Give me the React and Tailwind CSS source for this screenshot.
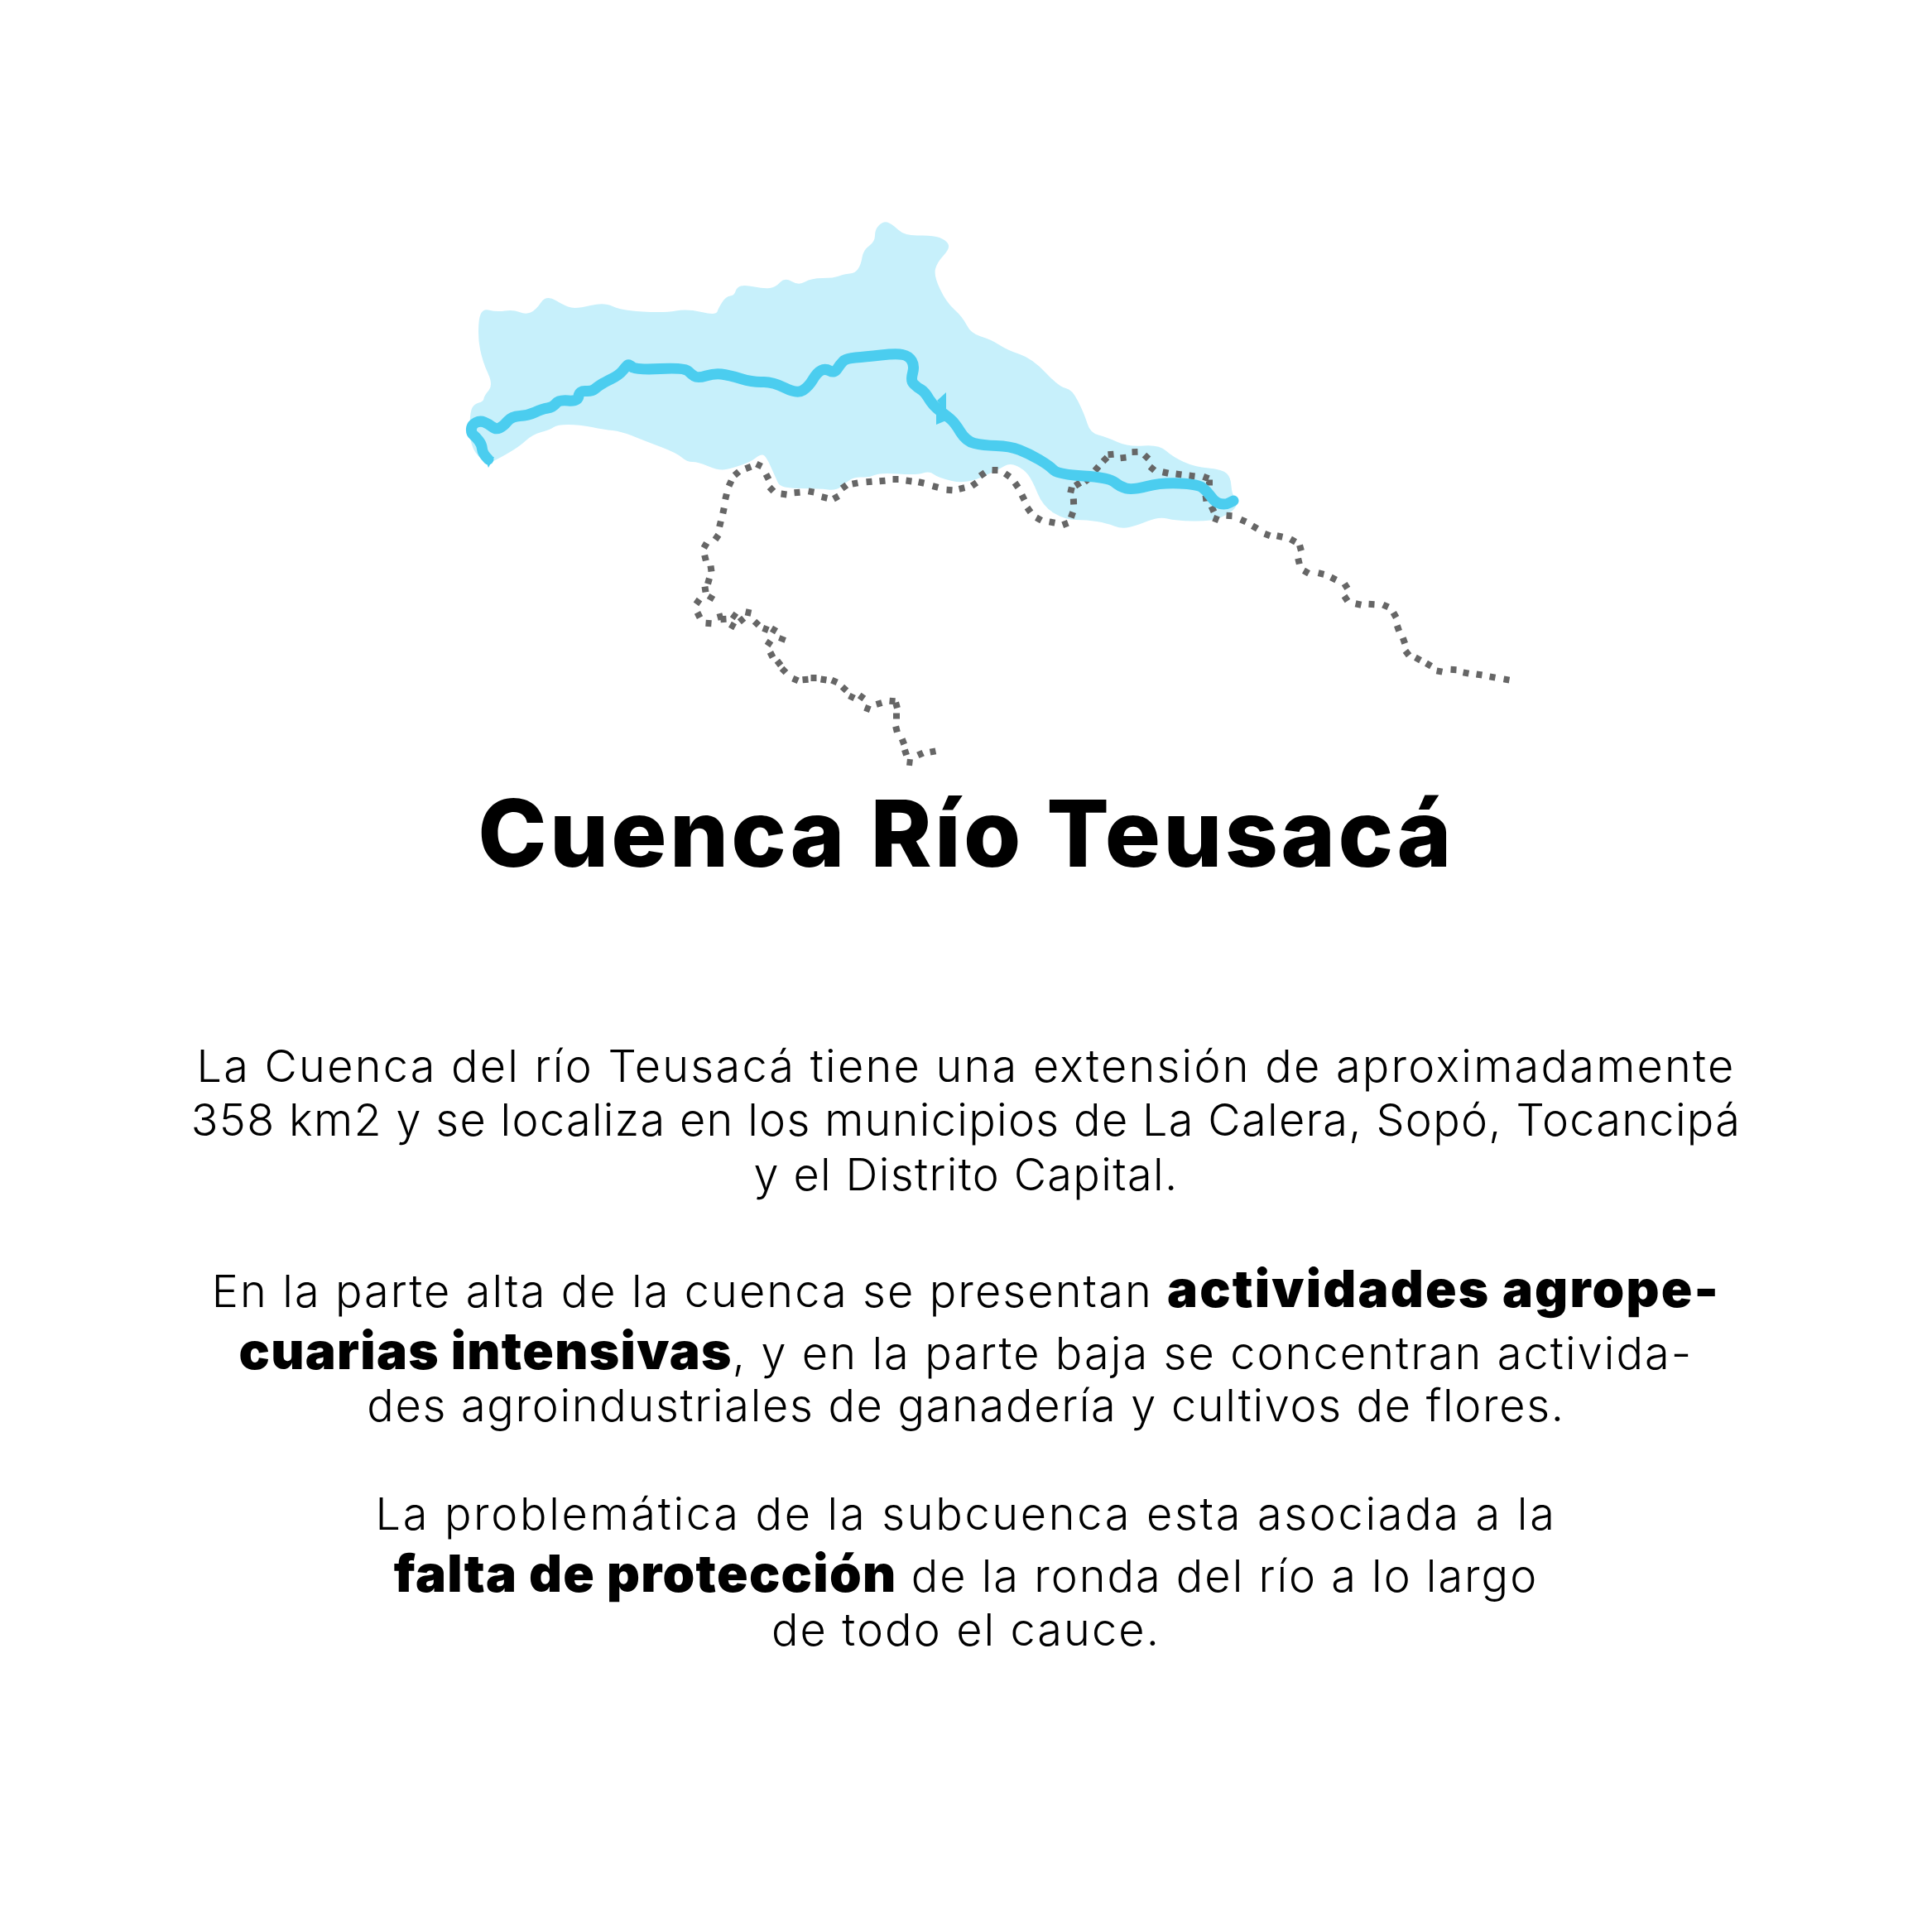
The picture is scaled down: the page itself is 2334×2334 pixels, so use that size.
import React from 'react'

// coordinates read off the reference, in page pixels
const BASIN = [
  [580,372],[600,377],[620,374],[635,380],[647,375],[660,356],[683,370],[697,373],[730,365],[750,375],[803,378],[830,373],[865,381],[868,372],[877,358],[887,357],[890,347],[900,344],[923,349],[937,347],[948,335],[965,345],[980,336],[1007,336],[1020,331],[1033,330],[1040,320],[1043,302],[1057,292],[1057,277],[1067,267],[1077,270],[1093,285],[1127,284],[1143,290],[1148,300],[1132,317],[1128,333],[1143,365],[1163,383],[1173,403],[1197,410],[1217,423],[1247,433],[1280,468],[1295,470],[1310,500],[1317,523],[1337,528],[1363,540],[1400,537],[1417,552],[1443,564],[1477,567],[1487,577],[1488,597],[1497,607],[1487,620],[1463,630],[1420,629],[1400,624],[1373,635],[1355,639],[1337,632],[1313,628],[1287,628],[1260,612],[1247,580],[1237,567],[1220,559],[1207,567],[1167,585],[1133,577],[1123,569],[1107,574],[1063,571],[1050,577],[1033,576],[1023,582],[1010,593],[990,590],[943,590],[937,577],[925,550],[918,549],[907,558],[880,567],[867,568],[843,558],[830,558],[817,547],[780,533],[750,521],[730,519],[700,513],[673,513],[665,519],[643,525],[627,540],[597,557],[588,560],[573,547],[567,527],[568,497],[573,488],[584,485],[585,478],[596,465],[583,437],[577,407],
]

const RIVER = [
  [590,555],[583,548],[582,537],[575,528],[569,523],[570,513],[580,508],[590,512],[599,519],[608,515],[618,503],[638,502],[655,494],[668,492],[675,483],[698,485],[700,472],[715,473],[722,467],[730,462],[748,453],[757,442],[760,440],[768,447],[827,444],[835,452],[843,457],[863,451],[880,453],[910,462],[933,461],[963,476],[977,467],[987,450],[997,445],[1008,451],[1015,440],[1022,433],[1045,431],[1083,427],[1098,430],[1105,442],[1100,460],[1108,468],[1117,473],[1127,490],[1143,502],[1153,510],[1167,533],[1187,538],[1220,539],[1243,548],[1267,562],[1278,573],[1340,577],[1353,588],[1368,592],[1403,583],[1447,585],[1458,593],[1468,607],[1480,610],[1490,605],
]

// every pair is the centre of one dash
const BORDER = [
  [1127,908],[1112,911],[1099,921],[1094,909],[1091,896],[1083,881],[1083,865],[1083,852],[1078,847],[1062,850],[1048,856],[1041,842],[1029,842],[1020,832],[1008,823],[995,821],[983,819],[973,821],[961,821],[947,810],[941,801],[932,791],[929,777],[945,772],[935,761],[925,760],[914,753],[904,740],[896,749],[885,756],[887,744],[874,748],[870,745],[856,753],[844,743],[843,727],[859,722],[852,712],[856,702],[859,687],[852,674],[852,659],[866,649],[870,633],[874,617],[877,600],[882,584],[890,572],[904,565],[917,562],[927,576],[932,591],[947,597],[963,595],[980,594],[996,601],[1010,601],[1020,588],[1033,584],[1050,582],[1066,581],[1082,579],[1098,581],[1113,583],[1130,588],[1147,592],[1162,590],[1177,585],[1187,573],[1202,568],[1217,574],[1228,586],[1236,601],[1243,616],[1255,627],[1271,631],[1287,633],[1295,622],[1297,606],[1294,592],[1302,585],[1313,580],[1325,566],[1335,555],[1342,549],[1357,553],[1371,546],[1385,552],[1392,566],[1408,571],[1424,573],[1440,575],[1457,577],[1461,583],[1457,602],[1465,615],[1469,627],[1485,623],[1502,629],[1516,637],[1531,646],[1546,648],[1562,653],[1571,662],[1569,678],[1578,691],[1596,693],[1611,699],[1626,708],[1626,723],[1641,730],[1657,730],[1674,732],[1685,743],[1689,759],[1696,774],[1700,789],[1713,796],[1726,803],[1739,811],[1756,809],[1771,813],[1787,815],[1803,818],[1820,821],
]

function smooth(pts, closed) {
  const mid = (a, b) => [(a[0] + b[0]) / 2, (a[1] + b[1]) / 2]
  if (closed) {
    const start = mid(pts[pts.length - 1], pts[0])
    let d = `M${start[0]} ${start[1]}`
    pts.forEach((p, i) => {
      const m = mid(p, pts[(i + 1) % pts.length])
      d += `Q${p[0]} ${p[1]} ${m[0]} ${m[1]}`
    })
    return d + 'Z'
  }
  let d = `M${pts[0][0]} ${pts[0][1]}`
  for (let i = 1; i < pts.length - 1; i++) {
    const m = mid(pts[i], pts[i + 1])
    d += `Q${pts[i][0]} ${pts[i][1]} ${m[0]} ${m[1]}`
  }
  const last = pts[pts.length - 1]
  return d + `L${last[0]} ${last[1]}`
}

function dash(p, i) {
  const a = BORDER[Math.max(i - 1, 0)]
  const b = BORDER[Math.min(i + 1, BORDER.length - 1)]
  const len = Math.hypot(b[0] - a[0], b[1] - a[1]) || 1
  const ux = ((b[0] - a[0]) / len) * 3.5
  const uy = ((b[1] - a[1]) / len) * 3.5
  return `M${p[0] - ux} ${p[1] - uy}L${p[0] + ux} ${p[1] + uy}`
}

function BasinMap() {
  return (
    <svg width="2334" height="949" viewBox="0 0 2334 949" className="block shrink-0">
      <path d={smooth(BASIN, true)} fill="#c7f0fb" />
      <path d={BORDER.map(dash).join('')} fill="none" stroke="#666666" strokeWidth="8" />
      <path d={smooth(RIVER, false)} fill="none" stroke="#4bcdef" strokeWidth="13" strokeLinecap="round" strokeLinejoin="round" />
      {/* spike on the bend and the two flared ends */}
      <path d="M1132 484L1143 474V497ZM1131 497V513L1143 508V497ZM585 551L597 552L590 565ZM1468 602L1492 604C1490 612 1480 616 1472 614Z" fill="#4bcdef" />
    </svg>
  )
}

function Line({ className, children }) {
  return <div className={`whitespace-nowrap ${className}`}>{children}</div>
}

export default function App() {
  return (
    <div className="w-[2334px] h-[2334px] bg-white text-black flex flex-col items-center text-center font-['Inter','Liberation_Sans',sans-serif] font-light text-[54px]">
      <BasinMap />
      <h1 className="h-[120px] leading-[120px] -mt-[3px] text-[112px] font-extrabold tracking-[3.3px] whitespace-nowrap">
        Cuenca Río Teusacá
      </h1>

      <div className="mt-[189px]">
        <Line className="h-[65px] leading-[66px] tracking-[2.25px]">La Cuenca del río Teusacá tiene una extensión de aproximadamente</Line>
        <Line className="h-[66px] leading-[66px] tracking-[1.33px]">358 km2 y se localiza en los municipios de La Calera, Sopó, Tocancipá</Line>
        <Line className="h-[66px] leading-[66px] tracking-[1.36px]">y el Distrito Capital.</Line>
      </div>

      <div className="mt-[72px]">
        <Line className="h-[75px] leading-[66px] tracking-[2.1px]">
          En la parte alta de la cuenca se presentan <b className="font-black text-[62px] tracking-[2.2px]">actividades agrope-</b>
        </Line>
        <Line className="h-[66px] leading-[66px] tracking-[2.1px]">
          <b className="font-black text-[62px] tracking-[1.3px]">cuarias intensivas</b>, y en la parte baja se concentran activida-
        </Line>
        <Line className="h-[66px] leading-[66px] tracking-[1.7px]">des agroindustriales de ganadería y cultivos de flores.</Line>
      </div>

      <div className="mt-[65px]">
        <Line className="h-[72px] leading-[66px] tracking-[2.7px]">La problemática de la subcuenca esta asociada a la</Line>
        <Line className="h-[68px] leading-[66px] tracking-[2px]">
          <b className="font-black text-[62px] tracking-[1.3px]">falta de protección</b> de la ronda del río a lo largo
        </Line>
        <Line className="h-[66px] leading-[66px] tracking-[2.1px]">de todo el cauce.</Line>
      </div>
    </div>
  )
}
